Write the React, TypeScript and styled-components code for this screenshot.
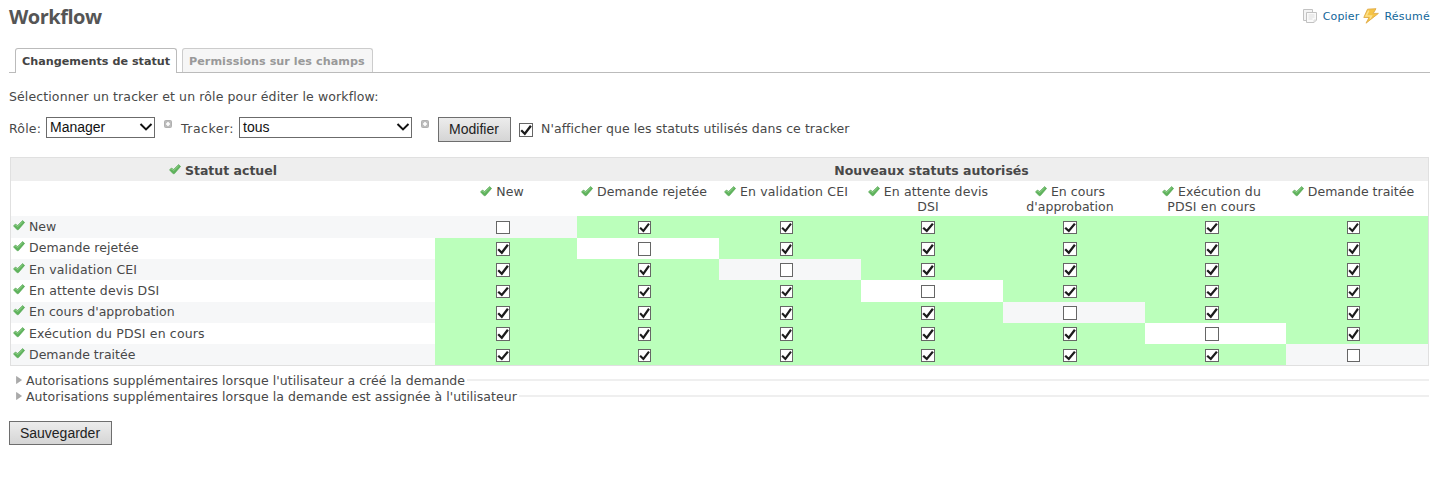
import React, { useState } from "react";
import styled, { createGlobalStyle } from "styled-components";

const GlobalStyle = createGlobalStyle`
  *, *::before, *::after { box-sizing: border-box; }
  body {
    margin: 0;
    background: #fff;
    color: #484848;
    font: 12.5px/15px Verdana, "DejaVu Sans", sans-serif;
    overflow: hidden;
  }
`;

const Page = styled.main`
  width: 1436px;
  height: 479px;
  padding: 4px 6px 0 9px;
`;

const Text = styled.span<{ $ls?: number }>`
  white-space: nowrap;
  letter-spacing: ${(p) => p.$ls ?? 0}px;
`;

const TopBar = styled.header`
  display: flex;
  justify-content: space-between;
  height: 44px;
`;

const Title = styled.h2`
  margin: 0;
  color: #555;
  font: bold 20px/26px "Trebuchet MS", "Open Sans", sans-serif;
  letter-spacing: -0.5px;
`;

const Actions = styled.nav`
  display: flex;
  height: 24px;
  align-items: center;
  font-size: 11px;
`;

const ActionLink = styled.a`
  display: flex;
  align-items: center;
  gap: 5px;
  margin-left: 4px;
  color: #169;
  text-decoration: none;
`;

const Tabs = styled.div`
  display: flex;
  height: 25px;
  padding-left: 6px;
  gap: 5px;
  border-bottom: 1px solid #bbb;
`;

const Tab = styled.a<{ $active?: boolean; $width: number }>`
  width: ${(p) => p.$width}px;
  height: ${(p) => (p.$active ? 25 : 24)}px;
  padding: 6px 0 0 6px;
  border: 1px solid ${(p) => (p.$active ? "#bbb" : "#ccc")};
  border-bottom: 0;
  border-radius: 3px 3px 0 0;
  background: ${(p) => (p.$active ? "#fff" : "#f6f6f6")};
  color: ${(p) => (p.$active ? "#444" : "#999")};
  font-size: 11.2px;
  font-weight: bold;
  line-height: 13px;
`;

const Intro = styled.p`
  margin: 16px 0 0;
  height: 28px;
`;

const Filters = styled.form`
  display: flex;
  align-items: flex-start;
  height: 40px;
`;

const Label = styled.label<{ $width: number }>`
  width: ${(p) => p.$width}px;
  padding-top: 4px;
`;

const SelectBox = styled.button<{ $width: number }>`
  display: flex;
  justify-content: space-between;
  align-items: center;
  width: ${(p) => p.$width}px;
  height: 21px;
  padding: 0 1px 1px 3px;
  border: 1px solid #6b6b6b;
  border-radius: 0;
  background: #fff;
  color: #111;
  font: 14px/18px Arial, "Liberation Sans", sans-serif;
`;

const PlusSlot = styled.span<{ $left: number; $right: number }>`
  display: flex;
  margin: 3px ${(p) => p.$right}px 0 ${(p) => p.$left}px;
`;

const PushButton = styled.button<{ $width: number; $height: number }>`
  width: ${(p) => p.$width}px;
  height: ${(p) => p.$height}px;
  padding: 0 1px 1px 0;
  border: 1px solid #6e6e6e;
  border-radius: 0;
  background: linear-gradient(#ececec, #d5d5d5);
  color: #222;
  font: 14px/20px Arial, "Liberation Sans", sans-serif;
`;

const CheckSlot = styled.span`
  display: flex;
  margin: 6px 8px 0 8px;
`;

const FilterText = styled.span`
  padding-top: 4px;
`;

const Table = styled.section`
  width: 1419px;
  height: 209px;
  margin-left: 1px;
  border: 1px solid #e0e0e0;
`;

const columns = "424px 142px 142px 142px 142px 142px 141px 142px";

const HeadRow = styled.div`
  display: grid;
  grid-template-columns: 424px 1fr;
  height: 23px;
  background: #eee;
  font-weight: bold;
`;

const HeadCell = styled.div`
  display: flex;
  justify-content: center;
  padding-top: 5px;
  gap: 4px;

  svg { margin-top: 1px; }
`;

const StatusRow = styled.div`
  display: grid;
  grid-template-columns: ${columns};
  height: 35px;
`;

const StatusCell = styled.div`
  padding: 3px 8px 0 0;
  text-align: center;
  line-height: 15px;
`;

const InlineTick = styled.span`
  display: inline-block;
  height: 11px;
  margin-right: 4px;
  padding-top: 1px;
  vertical-align: top;
`;

const Row = styled.div<{ $odd: boolean; $height: number }>`
  display: grid;
  grid-template-columns: ${columns};
  height: ${(p) => p.$height}px;
  background: ${(p) => (p.$odd ? "#f6f7f8" : "#fff")};
`;

const RowName = styled.div<{ $top: number }>`
  display: flex;
  gap: 4px;
  padding: ${(p) => p.$top}px 0 0 2px;

  svg { margin-top: 1px; }
`;

const Cell = styled.div<{ $enabled: boolean; $top: number; $left: number }>`
  display: flex;
  padding: ${(p) => p.$top}px 0 0 ${(p) => p.$left}px;
  background: ${(p) => (p.$enabled ? "#bbffbb" : "transparent")};
`;

const Box = styled.button<{ $height: number; $width: number }>`
  display: flex;
  width: ${(p) => p.$width}px;
  height: ${(p) => p.$height}px;
  padding: 0;
  border: 1px solid #666;
  border-radius: 0;
  background: #fff;
`;

const Extras = styled.section`
  padding-top: 6px;
  height: 55px;
`;

const ExtraRow = styled.div`
  display: flex;
  align-items: center;
  height: 16px;
  padding-left: 7px;
  padding-right: 1px;
  gap: 4px;
`;

const Rule = styled.span`
  flex: 1;
  height: 2px;
  margin-left: -2px;
  background: #efefef;
`;

const TickIcon = () => (
  <svg width="12" height="11" viewBox="0 0 12 11" fill="none">
    <path d="M.5 5.9 2.4 4l2.2 1.4L9.6.6l2 1.8L5.5 9.6l-1.3.2Z" fill="#5fb35c" stroke="#4fa44d" strokeWidth=".6" strokeLinejoin="round" />
    <path d="m1.7 5.6 1-.6 2 1.5L9.7 1.8" stroke="#93d08c" strokeWidth="1" />
  </svg>
);

const PlusIcon = () => (
  <svg width="8" height="8" viewBox="0 0 8 8">
    <rect x=".5" y=".5" width="7" height="7" rx="1" fill="#bdbdbd" stroke="#b0b0b0" />
    <path d="M4 2v4M2 4h4" stroke="#fff" strokeWidth="1.6" />
  </svg>
);

const CopyIcon = () => (
  <svg width="15" height="16" viewBox="0 0 15 16" stroke="#c2c2c2" fill="#f4f4f4">
    <path d="M.5 1.5h9v11h-9Z" />
    <path d="M3.5 4.5h10v7.5l-2.5 2.5H3.5Z" fill="#fafafa" />
    <path d="M13.5 12H11v2.5M5.5 7h6M5.5 9h6M5.5 11h4" fill="none" stroke="#d0d0d0" strokeWidth=".7" />
  </svg>
);

const BoltIcon = () => (
  <svg width="16" height="16" viewBox="0 0 16 16">
    <path d="M4.5 1.2 13 .7 10.2 5.4h5.2L3 15.2 6 9.5H.8Z" fill="#f6c445" stroke="#e0ab48" strokeWidth=".9" strokeLinejoin="round" />
    <path d="M5.8 2.6 3 8h5.4L7 10.6" fill="none" stroke="#fde08a" strokeWidth="1.5" />
  </svg>
);

const ChevronIcon = () => (
  <svg width="14" height="10" viewBox="0 0 14 10">
    <path d="m1.5 2 5.5 5.4L12.5 2" fill="none" stroke="#111" strokeWidth="2" />
  </svg>
);

const ArrowIcon = () => (
  <svg width="6" height="8" viewBox="0 0 6 8">
    <path d="M.5.5 5.5 4l-5 3.5Z" fill="#aaa" stroke="#999" strokeWidth=".6" />
  </svg>
);

const CheckBox = ({ initial, width = 14, height = 14 }: { initial: boolean; width?: number; height?: number }) => {
  const [on, setOn] = useState(initial);
  return (
    <Box type="button" role="checkbox" aria-checked={on} $width={width} $height={height} onClick={() => setOn(!on)}>
      {on && (
        <svg width={width - 2} height={height - 2} viewBox="0 0 12 12" preserveAspectRatio="none">
          <path d="m1.2 6.2 3.6 3.5L10.9 1.8" fill="none" stroke="#1c1c1c" strokeWidth="2.3" />
        </svg>
      )}
    </Box>
  );
};

const statuses = [
  { name: "New", lines: ["New"], height: 22, textTop: 3, boxTop: 5, boxHeight: 13, boxLeft: 61, boxWidth: 14, ls: 0 },
  { name: "Demande rejetée", lines: ["Demande rejetée"], height: 21, textTop: 2, boxTop: 4, boxHeight: 14, boxLeft: 61, boxWidth: 13, ls: 0.08 },
  { name: "En validation CEI", lines: ["En validation CEI"], height: 21, textTop: 3, boxTop: 4, boxHeight: 14, boxLeft: 61, boxWidth: 13, ls: 0.15 },
  { name: "En attente devis DSI", lines: ["En attente devis", "DSI"], height: 22, textTop: 3, boxTop: 5, boxHeight: 13, boxLeft: 60, boxWidth: 14, ls: 0.13 },
  { name: "En cours d'approbation", lines: ["En cours", "d'approbation"], height: 21, textTop: 2, boxTop: 4, boxHeight: 14, boxLeft: 60, boxWidth: 14, ls: 0.04 },
  { name: "Exécution du PDSI en cours", lines: ["Exécution du", "PDSI en cours"], height: 21, textTop: 3, boxTop: 4, boxHeight: 14, boxLeft: 60, boxWidth: 14, ls: 0.16 },
  { name: "Demande traitée", lines: ["Demande traitée"], height: 21, textTop: 3, boxTop: 5, boxHeight: 13, boxLeft: 61, boxWidth: 13, ls: 0.02 },
];

export default function App() {
  return (
    <Page>
      <GlobalStyle />
      <TopBar>
        <Title>Workflow</Title>
        <Actions>
          <ActionLink><CopyIcon /><Text $ls={0.15}>Copier</Text></ActionLink>
          <ActionLink><BoltIcon /><Text $ls={0.25}>Résumé</Text></ActionLink>
        </Actions>
      </TopBar>
      <Tabs>
        <Tab $active $width={162}><Text>Changements de statut</Text></Tab>
        <Tab $width={191}><Text $ls={0.04}>Permissions sur les champs</Text></Tab>
      </Tabs>
      <Intro><Text $ls={0.12}>Sélectionner un tracker et un rôle pour éditer le workflow:</Text></Intro>
      <Filters>
        <Label $width={37}><Text $ls={0.2}>Rôle:</Text></Label>
        <SelectBox type="button" $width={109}>Manager<ChevronIcon /></SelectBox>
        <PlusSlot $left={9} $right={9}><PlusIcon /></PlusSlot>
        <Label $width={58}><Text $ls={0.5}>Tracker:</Text></Label>
        <SelectBox type="button" $width={173}>tous<ChevronIcon /></SelectBox>
        <PlusSlot $left={9} $right={9}><PlusIcon /></PlusSlot>
        <PushButton type="button" $width={73} $height={25}>Modifier</PushButton>
        <CheckSlot><CheckBox initial /></CheckSlot>
        <FilterText><Text $ls={0.06}>N'afficher que les statuts utilisés dans ce tracker</Text></FilterText>
      </Filters>
      <Table>
        <HeadRow>
          <HeadCell><TickIcon /><Text>Statut actuel</Text></HeadCell>
          <HeadCell><Text>Nouveaux statuts autorisés</Text></HeadCell>
        </HeadRow>
        <StatusRow>
          <span />
          {statuses.map((s) => (
            <StatusCell key={s.name}>
              <InlineTick><TickIcon /></InlineTick>
              <Text $ls={s.ls}>{s.lines[0]}</Text>
              {s.lines[1] && <><br /><Text $ls={s.ls}>{s.lines[1]}</Text></>}
            </StatusCell>
          ))}
        </StatusRow>
        {statuses.map((from, r) => (
          <Row key={from.name} $odd={r % 2 === 0} $height={from.height}>
            <RowName $top={from.textTop}><TickIcon /><Text $ls={from.ls}>{from.name}</Text></RowName>
            {statuses.map((to, c) => (
              <Cell key={to.name} $enabled={r !== c} $top={from.boxTop} $left={to.boxLeft}>
                <CheckBox initial={r !== c} width={to.boxWidth} height={from.boxHeight} />
              </Cell>
            ))}
          </Row>
        ))}
      </Table>
      <Extras>
        <ExtraRow><ArrowIcon /><Text $ls={0.05}>Autorisations supplémentaires lorsque l'utilisateur a créé la demande</Text><Rule /></ExtraRow>
        <ExtraRow><ArrowIcon /><Text $ls={0.05}>Autorisations supplémentaires lorsque la demande est assignée à l'utilisateur</Text><Rule /></ExtraRow>
      </Extras>
      <PushButton type="button" $width={103} $height={24}>Sauvegarder</PushButton>
    </Page>
  );
}
